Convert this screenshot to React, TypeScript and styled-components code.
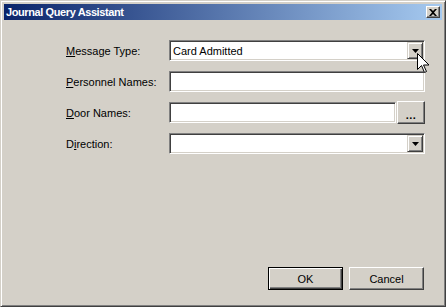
import React from 'react';
import styled, { createGlobalStyle } from 'styled-components';

const GlobalStyle = createGlobalStyle`
  html, body {
    margin: 0;
    padding: 0;
    background: #d4d0c8;
  }
  body {
    font-family: "Liberation Sans", Arial, sans-serif;
    font-size: 11px;
    color: #000;
  }
`;

const Window = styled.div`
  position: relative;
  width: 446px;
  height: 307px;
  box-sizing: border-box;
  display: flex;
  flex-direction: column;
  background: #d4d0c8;
  border: 1px solid;
  border-color: #d4d0c8 #404040 #404040 #d4d0c8;
  box-shadow: inset 1px 1px #ffffff, inset -1px -1px #808080;
  padding: 3px;
`;

const TitleBar = styled.div`
  height: 16px;
  display: flex;
  align-items: center;
  justify-content: space-between;
  padding: 0 2px 0 2px;
  background: linear-gradient(to right, #0a246a 0%, #a6caf0 100%);
`;

const Title = styled.span`
  color: #fff;
  font-weight: bold;
  font-size: 11px;
  letter-spacing: -0.4px;
`;

const CloseButton = styled.div`
  width: 14px;
  height: 12px;
  box-sizing: border-box;
  display: flex;
  align-items: center;
  justify-content: center;
  background: #d4d0c8;
  border: 1px solid;
  border-color: #ffffff #404040 #404040 #ffffff;
  box-shadow: inset -1px -1px #808080;
`;

const Body = styled.div`
  flex: 1;
  display: flex;
  flex-direction: column;
  padding: 20px 17px 13px 62px;
`;

const Form = styled.div`
  display: grid;
  grid-template-columns: 103px 256px;
  grid-auto-rows: 21px;
  row-gap: 10px;
`;

const Label = styled.label`
  display: flex;
  align-items: center;
  white-space: nowrap;
`;

const FieldCell = styled.div`
  display: flex;
  align-items: center;
`;

const Sunken = styled.div`
  flex: 1;
  height: 21px;
  box-sizing: border-box;
  display: flex;
  align-items: center;
  background: #fff;
  border: 1px solid;
  border-color: #808080 #ffffff #ffffff #808080;
  box-shadow: inset 1px 1px #404040, inset -1px -1px #d4d0c8;
  padding: 2px 2px 2px 3px;
`;

const Value = styled.span`
  flex: 1;
  white-space: nowrap;
`;

const DropButton = styled.div`
  width: 16px;
  height: 17px;
  margin-right: -1px;
  box-sizing: border-box;
  display: flex;
  align-items: center;
  justify-content: center;
  background: #d4d0c8;
  border: 1px solid;
  border-color: #d4d0c8 #404040 #404040 #d4d0c8;
  box-shadow: inset 1px 1px #ffffff, inset -1px -1px #808080;
`;

const Raised = styled.button<{ $default?: boolean }>`
  box-sizing: border-box;
  display: flex;
  align-items: center;
  justify-content: center;
  padding: 0;
  font: inherit;
  color: #000;
  background: #d4d0c8;
  border: 1px solid;
  border-color: ${({ $default }) => ($default ? '#000' : '#fff #404040 #404040 #fff')};
  box-shadow: ${({ $default }) =>
    $default
      ? 'inset 1px 1px #fff, inset -1px -1px #404040, inset -2px -2px #808080'
      : 'inset -1px -1px #808080'};
`;

const BrowseButton = styled(Raised)`
  width: 28px;
  height: 23px;
  margin: -1px 0 -1px 1px;
  font-weight: bold;
  padding-top: 4px;
  letter-spacing: 0.5px;
`;

const ButtonRow = styled.div`
  margin-top: auto;
  display: flex;
  justify-content: flex-end;
  gap: 6px;
  padding-right: 1px;
`;

const DialogButton = styled(Raised)`
  width: 75px;
  height: 23px;
`;

const Cursor = styled.svg`
  position: absolute;
  left: 416px;
  top: 52px;
`;

const Arrow = () => (
  <svg width="7" height="4" viewBox="0 0 7 4">
    <path d="M0 0h7L3.5 4z" fill="#000" />
  </svg>
);

const Combo: React.FC<{ value?: string }> = ({ value }) => (
  <Sunken>
    <Value>{value}</Value>
    <DropButton>
      <Arrow />
    </DropButton>
  </Sunken>
);

const App: React.FC = () => (
  <>
    <GlobalStyle />
    <Window>
      <TitleBar>
        <Title>Journal Query Assistant</Title>
        <CloseButton>
          <svg width="8" height="7" viewBox="0 0 8 7">
            <path d="M0 0h2l2 2 2-2h2L5 3.5 8 7H6L4 5 2 7H0l3-3.5z" fill="#000" />
          </svg>
        </CloseButton>
      </TitleBar>
      <Body>
        <Form>
          <Label>
            <span><u>M</u>essage Type:</span>
          </Label>
          <FieldCell>
            <Combo value="Card Admitted" />
          </FieldCell>

          <Label>
            <span><u>P</u>ersonnel Names:</span>
          </Label>
          <FieldCell>
            <Sunken />
          </FieldCell>

          <Label>
            <span><u>D</u>oor Names:</span>
          </Label>
          <FieldCell>
            <Sunken />
            <BrowseButton>...</BrowseButton>
          </FieldCell>

          <Label>
            <span>D<u>i</u>rection:</span>
          </Label>
          <FieldCell>
            <Combo />
          </FieldCell>
        </Form>
        <ButtonRow>
          <DialogButton $default>OK</DialogButton>
          <DialogButton>Cancel</DialogButton>
        </ButtonRow>
      </Body>
      <Cursor width="13" height="21" viewBox="0 0 13 21">
        <path
          d="M0.5 0.5v16l4-4 3 7 2-1-3-6.5h5.5z"
          fill="#fff"
          stroke="#000"
          strokeWidth="1"
        />
      </Cursor>
    </Window>
  </>
);

export default App;
